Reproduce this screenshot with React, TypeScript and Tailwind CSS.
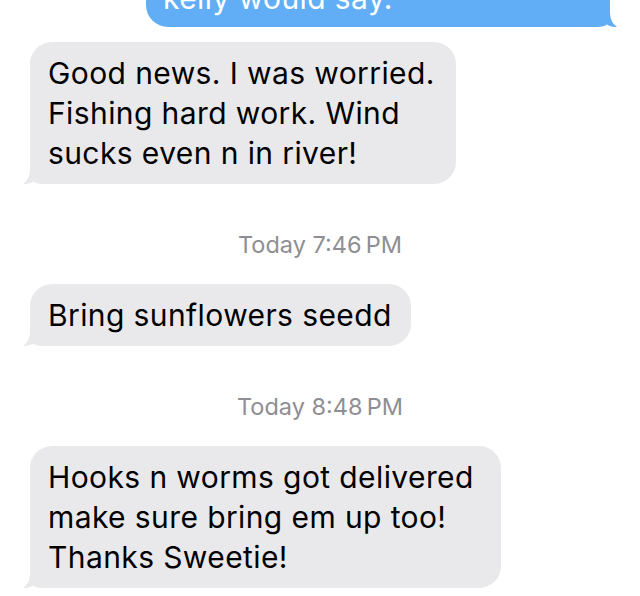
const FONT = "font-['Inter','Liberation_Sans',sans-serif]";

function Tail({ side, color }: { side: 'left' | 'right'; color: string }) {
  const pos = side === 'left' ? 'left-[-7px]' : 'right-[-7px] -scale-x-100';
  return (
    <svg
      className={`absolute bottom-0 ${pos}`}
      width="28"
      height="22"
      viewBox="0 0 28 22"
    >
      <path
        d="M7 0 H28 V22 H20 C15 22 12 21 10 19.5 C7 21.5 4 22 0 22 C4 19 7 15 7 7 Z"
        fill={color}
      />
    </svg>
  );
}

function Incoming({ lines, width }: { lines: string[]; width: string }) {
  return (
    <div className={`relative ml-[30px] ${width} rounded-[22px] bg-[#e9e9eb] px-[18px] py-[11px]`}>
      <Tail side="left" color="#e9e9eb" />
      <p className="relative text-[30px] leading-[40px] tracking-[0.4px] text-black">
        {lines.map((l, i) => (
          <span key={i} className="block whitespace-nowrap">
            {l}
          </span>
        ))}
      </p>
    </div>
  );
}

function Stamp({ time }: { time: string }) {
  return (
    <div className="mt-[47px] mb-[25px] text-center text-[23.5px] leading-[28px] text-[#8e8e93]">
      Today {time}{'\u2009'}PM
    </div>
  );
}

export default function App() {
  return (
    <div className={`h-[596px] w-[640px] overflow-hidden bg-white ${FONT}`}>
      <div className="flex flex-col">
        <div className="relative mt-[-33px] mr-[30px] self-end w-[464px] rounded-[22px] bg-[#62aef6] px-[17px] pt-[11px] pb-[9px]">
          <Tail side="right" color="#62aef6" />
          <p className="relative text-[30px] leading-[40px] tracking-[0.4px] text-white">kelly would say.</p>
        </div>

        <div className="mt-[15px]">
          <Incoming
            width="w-[426px]"
            lines={['Good news. I was worried.', 'Fishing hard work. Wind', 'sucks even n in river!']}
          />
        </div>

        <Stamp time="7:46" />
        <Incoming width="w-[381px]" lines={['Bring sunflowers seedd']} />

        <Stamp time="8:48" />
        <Incoming
          width="w-[471px]"
          lines={['Hooks n worms got delivered', 'make sure bring em up too!', 'Thanks Sweetie!']}
        />
      </div>
    </div>
  );
}
